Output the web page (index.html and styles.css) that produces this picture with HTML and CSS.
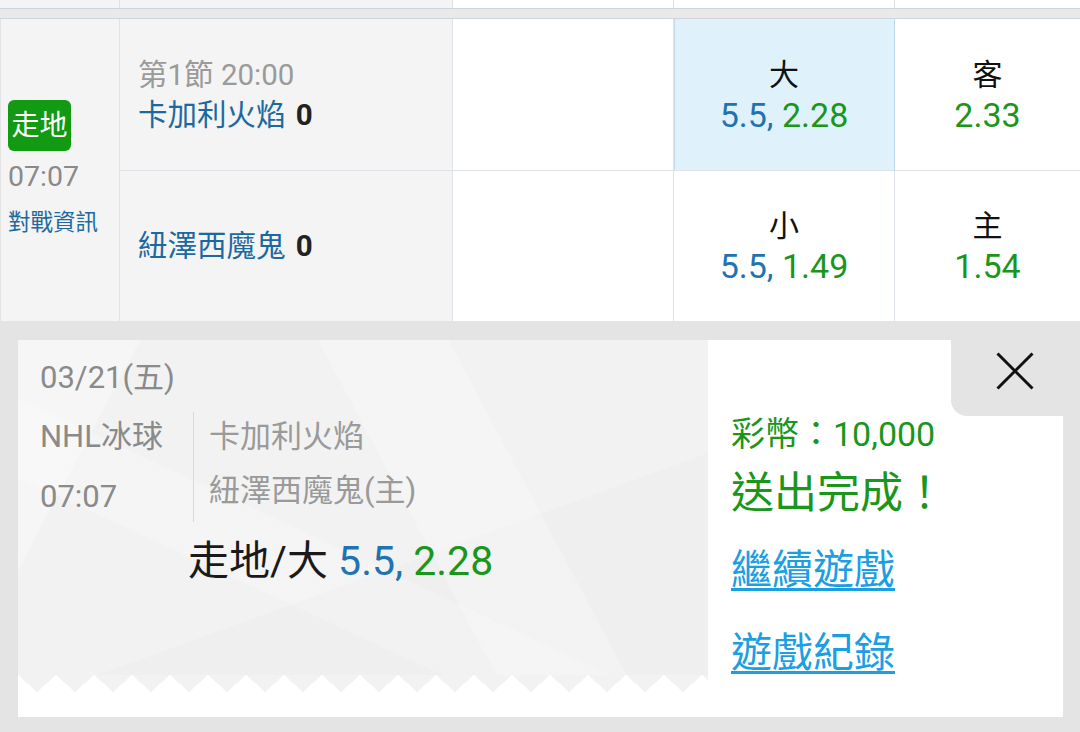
FILE: index.html
```html
<!DOCTYPE html>
<html lang="zh-Hant">
<head>
<meta charset="utf-8">
<title>走地</title>
<link rel="stylesheet" href="styles.css">
</head>
<body>
<div class="prev">
  <div class="pc grey"></div>
  <div class="pc grey"></div>
  <div class="pc"></div>
  <div class="pc"></div>
  <div class="pc"></div>
</div>
<div class="sep"></div>
<div class="match">
  <div class="cell info">
    <span class="badge">走地</span>
    <span class="clock">07:07</span>
    <span class="h2h">對戰資訊</span>
  </div>
  <div class="cell team grey top">
    <div class="period">第1節 20:00</div>
    <div class="name">卡加利火焰 <b>0</b></div>
  </div>
  <div class="cell top"></div>
  <div class="cell odd top sel">
    <div class="lbl">大</div>
    <div class="val"><span class="line">5.5,</span> <span class="price">2.28</span></div>
  </div>
  <div class="cell odd top last">
    <div class="lbl">客</div>
    <div class="val"><span class="price">2.33</span></div>
  </div>
  <div class="cell team grey">
    <div class="name">紐澤西魔鬼 <b>0</b></div>
  </div>
  <div class="cell"></div>
  <div class="cell odd">
    <div class="lbl">小</div>
    <div class="val"><span class="line">5.5,</span> <span class="price">1.49</span></div>
  </div>
  <div class="cell odd last">
    <div class="lbl">主</div>
    <div class="val"><span class="price">1.54</span></div>
  </div>
</div>
<div class="panel">
  <div class="card">
    <div class="ticket">
      <div class="ticket-body">
        <div class="date">03/21(五)</div>
        <div class="meta">
          <div class="league">
            <div class="ln">NHL冰球</div>
            <div class="ln second">07:07</div>
          </div>
          <div class="teams">
            <div class="ln">卡加利火焰</div>
            <div class="ln">紐澤西魔鬼(主)</div>
          </div>
        </div>
        <div class="bet">走地/大 <span class="line">5.5,</span> <span class="price">2.28</span></div>
      </div>
      <div class="zigzag"></div>
    </div>
    <div class="result">
      <div class="coins">彩幣：10,000</div>
      <div class="done">送出完成！</div>
      <a class="link first">繼續遊戲</a>
      <a class="link second">遊戲紀錄</a>
    </div>
    <div class="close">
      <svg class="x" width="38" height="38" viewBox="0 0 38 38">
        <path d="M1.5 1.5 L36.5 36.5 M36.5 1.5 L1.5 36.5" stroke="#111" stroke-width="3" fill="none"/>
      </svg>
    </div>
  </div>
</div>
</body>
</html>
```
FILE: styles.css
```css
html, body {
  margin: 0;
  padding: 0;
}
body {
  width: 1080px;
  height: 732px;
  overflow: hidden;
  background: #e4e4e4;
  font-family: Roboto, "Noto Sans CJK TC", sans-serif;
  color: #111;
}

.prev {
  display: grid;
  grid-template-columns: 120px 333px 221px 221px 1fr;
  height: 9px;
  background: #fff;
}
.pc {
  box-sizing: border-box;
  border-right: 1px solid #dde2e6;
  border-bottom: 1px solid #cdd5db;
}
.pc:last-child {
  border-right: none;
}
.sep {
  height: 9px;
  background: #e9e9e9;
}

.match {
  display: grid;
  grid-template-columns: 120px 333px 221px 221px 1fr;
  grid-template-rows: 152px 150px;
  border-top: 1px solid #cdd5db;
  background: #fff;
}
.cell {
  box-sizing: border-box;
  border-right: 1px solid #dde3e8;
}
.cell.top {
  border-bottom: 1px solid #dde3e8;
}
.cell.last {
  border-right: none;
}
.grey {
  background: #f4f4f4;
}

.info {
  grid-row: 1 / span 2;
  background: #f4f4f4;
  border-left: 1px solid #e3e3e3;
  padding: 81px 0 0 7px;
  display: flex;
  flex-direction: column;
  align-items: flex-start;
}
.badge {
  width: 63px;
  height: 51px;
  border-radius: 6px;
  background: #129a12;
  color: #fff;
  font-size: 28px;
  line-height: 51px;
  text-align: center;
}
.clock {
  margin-top: 8px;
  font-size: 28.5px;
  line-height: 36px;
  color: #8a8a8a;
}
.h2h {
  margin-top: 12px;
  font-size: 22.5px;
  line-height: 30px;
  color: #1c6aa0;
}

.team {
  display: flex;
  flex-direction: column;
  justify-content: center;
  padding-left: 18px;
  font-size: 29.5px;
  line-height: 40px;
}
.period {
  color: #9a9a9a;
}
.name {
  color: #1b69a0;
}
.name b {
  margin-left: 3px;
  color: #222;
  font-weight: 700;
  font-family: Roboto, sans-serif;
}

.odd {
  display: flex;
  flex-direction: column;
  justify-content: center;
  align-items: center;
  text-align: center;
}
.odd .lbl {
  font-size: 30px;
  line-height: 41px;
  color: #111;
}
.odd .val {
  font-size: 34px;
  line-height: 41px;
}
.sel {
  background: #dff2fc;
  border-right-color: #bcd6e7;
  border-bottom-color: #bcd6e7;
  box-shadow: inset 1px 0 0 #c6dbe8;
}
.line {
  color: #1f73b1;
}
.price {
  color: #1a961a;
}

.panel {
  padding: 19px 17px 0 18px;
}
.card {
  position: relative;
  height: 377px;
  background: #fff;
  display: flex;
}
.ticket {
  width: 690px;
  display: flex;
  flex-direction: column;
}
.ticket-body {
  box-sizing: border-box;
  height: 335px;
  padding: 18px 0 0 22px;
  background:
    linear-gradient(118deg, rgba(255,255,255,0.3) 0 14%, transparent 14.2%),
    linear-gradient(62deg, transparent 0 55%, rgba(255,255,255,0.22) 55.2% 70%, transparent 70.2%),
    linear-gradient(160deg, transparent 0 62%, rgba(0,0,0,0.01) 62.2% 100%),
    linear-gradient(25deg, transparent 0 30%, rgba(255,255,255,0.2) 30.2% 42%, transparent 42.2%),
    #f2f2f2;
}
.zigzag {
  height: 17px;
  background: conic-gradient(from -48deg at 50% 100%, #f2f2f2 96deg, transparent 0) 0 0 / 38px 17px repeat-x;
}
.date {
  font-size: 31px;
  line-height: 40px;
  color: #8a8a8a;
}
.meta {
  display: flex;
  margin-top: 14px;
}
.league {
  width: 153px;
  font-size: 31px;
  color: #8a8a8a;
}
.ln {
  height: 50px;
  line-height: 50px;
  white-space: nowrap;
}
.league .second {
  margin-top: 10px;
}
.teams {
  border-left: 1px solid #d9d9d9;
  padding-left: 15px;
  font-size: 31px;
  color: #9a9a9a;
  display: flex;
  flex-direction: column;
  gap: 4px;
}
.bet {
  margin: 14px 0 0 148px;
  font-size: 41px;
  line-height: 50px;
  color: #1a1a1a;
  white-space: nowrap;
}

.result {
  flex: 1;
  padding: 69px 0 0 23px;
  display: flex;
  flex-direction: column;
  align-items: flex-start;
}
.coins {
  font-size: 34px;
  line-height: 50px;
  color: #1a961a;
}
.done {
  margin-top: 9px;
  font-size: 43px;
  line-height: 50px;
  color: #1a961a;
}
.link {
  font-size: 41px;
  line-height: 50px;
  color: #1c9fe2;
  text-decoration: underline;
  text-decoration-thickness: 3px;
  text-underline-offset: 4px;
}
.link.first {
  margin-top: 27px;
}
.link.second {
  margin-top: 33px;
}

.close {
  position: absolute;
  top: 0;
  right: 0;
  width: 112px;
  height: 76px;
  background: #e4e4e4;
  border-bottom-left-radius: 16px;
}
.x {
  display: block;
  margin: 12px 0 0 45px;
}
```
